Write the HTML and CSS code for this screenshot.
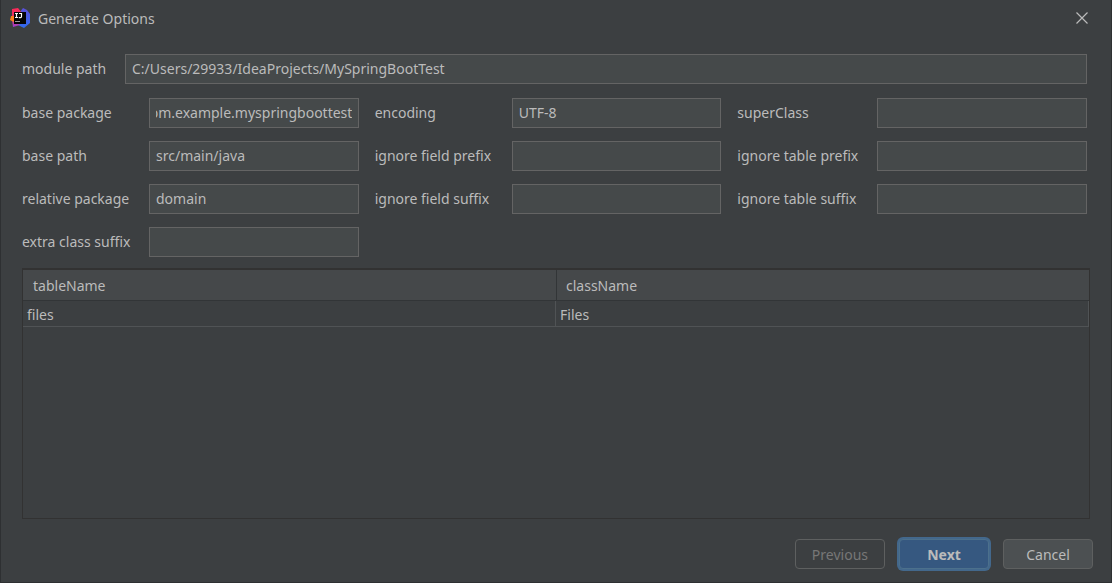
FILE: index.html
```html
<!DOCTYPE html>
<html lang="en">
<head>
<meta charset="utf-8">
<title>Generate Options</title>
<link rel="stylesheet" href="styles.css">
</head>
<body>
<main class="dialog">
  <header class="titlebar">
    <svg class="logo" viewBox="0 0 20 20" aria-hidden="true">
      <defs>
        <linearGradient id="red" x1="0" y1="0" x2="0" y2="1"><stop offset="0" stop-color="#fe2857"/><stop offset=".55" stop-color="#e8356b"/><stop offset="1" stop-color="#9b3fd0"/></linearGradient>
        <linearGradient id="blue" x1="0" y1="0" x2="0" y2="1"><stop offset="0" stop-color="#5b4fd8"/><stop offset="1" stop-color="#2f6cf0"/></linearGradient>
      </defs>
      <path d="M10 4L13 0L17 2L20 6V15L14 20L8 17Z" fill="url(#blue)"/>
      <path d="M2 1L8 0L12 5L9 16L10 17L3 19L2 12Z" fill="url(#red)"/>
      <path d="M1 8L5 8L4 14L0 12Z" fill="#fc801d"/>
      <rect x="4" y="4" width="12" height="12" fill="#050505"/>
      <path d="M5 5.500H8M6.500 5V10M5 9.500H8M9 5.500H11.500V8.500Q11.500 9.600 10.500 9.600H8.800" fill="none" stroke="#fff" stroke-width="1.200"/>
      <path d="M5 13.500H10" stroke="#999" stroke-width="1"/>
    </svg>
    <h1 class="title">Generate Options</h1>
    <button class="close" type="button" aria-label="Close">
      <svg class="close-icon" viewBox="0 0 12 12" aria-hidden="true"><path d="M.5 .5L11.500 11.500M11.500 .5L.5 11.500" fill="none" stroke="currentColor" stroke-width="1.200"/></svg>
    </button>
  </header>
  <form class="options">
    <div class="module">
      <label for="module-path">module path</label>
      <input class="field" id="module-path" type="text" value="C:/Users/29933/IdeaProjects/MySpringBootTest">
    </div>
    <div class="grid">
      <label for="base-package">base package</label>
      <input class="field" id="base-package" type="text" value="com.example.myspringboottest">
      <label for="encoding">encoding</label>
      <input class="field" id="encoding" type="text" value="UTF-8">
      <label for="super-class">superClass</label>
      <input class="field" id="super-class" type="text">
      <label for="base-path">base path</label>
      <input class="field" id="base-path" type="text" value="src/main/java">
      <label for="field-prefix">ignore field prefix</label>
      <input class="field" id="field-prefix" type="text">
      <label for="table-prefix">ignore table prefix</label>
      <input class="field" id="table-prefix" type="text">
      <label for="relative-package">relative package</label>
      <input class="field" id="relative-package" type="text" value="domain">
      <label for="field-suffix">ignore field suffix</label>
      <input class="field" id="field-suffix" type="text">
      <label for="table-suffix">ignore table suffix</label>
      <input class="field" id="table-suffix" type="text">
      <label for="class-suffix">extra class suffix</label>
      <input class="field" id="class-suffix" type="text">
    </div>
  </form>
  <div class="table-pane">
    <table class="tables">
      <thead><tr><th scope="col">tableName</th><th scope="col">className</th></tr></thead>
      <tbody><tr><td>files</td><td>Files</td></tr></tbody>
    </table>
  </div>
  <footer class="actions">
    <button class="button" type="button" disabled>Previous</button>
    <button class="button primary" type="button">Next</button>
    <button class="button" type="button">Cancel</button>
  </footer>
</main>
<script src="script.js"></script>
</body>
</html>
```
FILE: styles.css
```css
* { box-sizing: border-box; }

body {
  margin: 0;
  background: #3c3f41;
  color: #bbbbbb;
  font: 14px/20px "Noto Sans", "Open Sans", sans-serif;
}

.dialog {
  display: flex;
  flex-direction: column;
  min-height: 100vh;
  border: 1px solid #2e3032;
  border-top: 0;
}

.titlebar {
  display: flex;
  align-items: center;
  gap: 8px;
  height: 35px;
  padding: 0 23px 0 9px;
}

.logo { width: 20px; height: 20px; }

.title {
  flex: 1;
  margin: 0;
  padding-top: 2px;
  font-size: inherit;
  font-weight: 400;
}

.close {
  display: flex;
  padding: 0;
  border: 0;
  background: none;
  color: #bbbbbb;
}

.close-icon { width: 12px; height: 12px; }

.options {
  display: flex;
  flex-direction: column;
  gap: 14px;
  padding: 19px 24px 0 21px;
}

.module {
  display: grid;
  grid-template-columns: 87px 1fr;
  align-items: center;
  gap: 16px;
}

.grid {
  display: grid;
  grid-template-columns: 111px 1fr 121px 1fr 124px 1fr;
  align-items: center;
  gap: 13px 16px;
}

label { white-space: nowrap; }

.field {
  width: 100%;
  min-width: 0;
  height: 30px;
  padding: 0 6px 2px;
  border: 1px solid #646464;
  border-radius: 0;
  outline: 0;
  background: #45494a;
  color: inherit;
  font: inherit;
}

.table-pane {
  flex: 1;
  margin: 11px 21px 0;
  border: 1px solid #323232;
  border-top-width: 2px;
}

.tables {
  width: 100%;
  border-collapse: separate;
  border-spacing: 0;
  table-layout: fixed;
}

th {
  height: 31px;
  padding: 2px 9px 0;
  border-bottom: 1px solid #323537;
  background: #45484a;
  font-weight: 400;
  text-align: left;
}

th:first-child { padding-left: 10px; }

th + th { border-left: 1px solid #323537; }

td {
  height: 26px;
  padding: 2px 4px 0;
  border-right: 1px solid #505355;
  border-bottom: 1px solid #505355;
}

.actions {
  display: flex;
  justify-content: flex-end;
  gap: 14px;
  padding: 20px 18px 13px;
}

.button {
  min-width: 90px;
  height: 30px;
  padding: 2px 16px 0;
  border: 1px solid #5e6060;
  border-radius: 4px;
  background: #4c5052;
  color: #bbbbbb;
  font: inherit;
}

.button:disabled {
  background: none;
  color: #777777;
}

.primary {
  border-color: #4c708c;
  background: #365880;
  box-shadow: 0 0 0 2px #43688c;
  font-weight: 700;
}
```
FILE: script.js
```js
// Show the end of the package name when it is wider than its field.
const basePackage = document.getElementById("base-package");
basePackage.scrollLeft = basePackage.scrollWidth;
```
